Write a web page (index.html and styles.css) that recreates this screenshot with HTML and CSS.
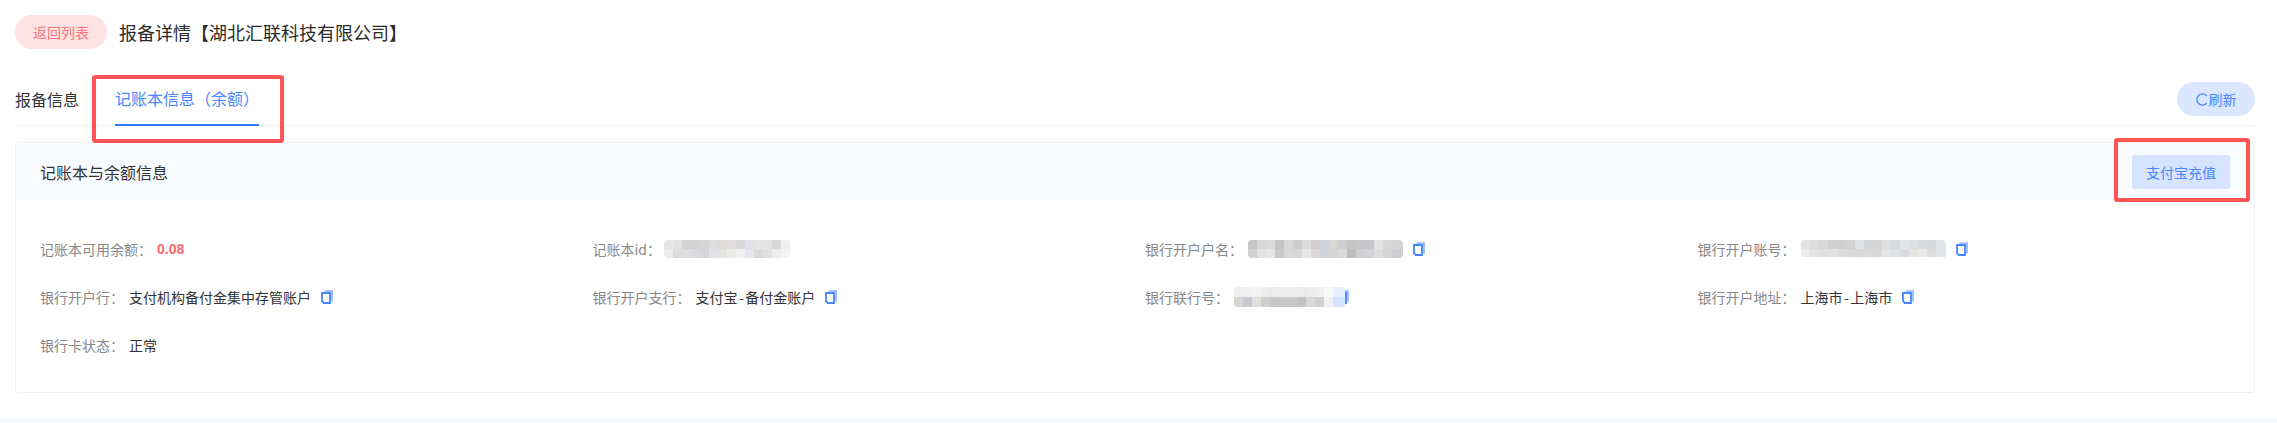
FILE: index.html
```html
<!DOCTYPE html>
<html lang="zh-CN">
<head>
<meta charset="utf-8">
<title>报备详情</title>
<link rel="stylesheet" href="styles.css">
</head>
<body>
<svg class="defs" width="0" height="0" aria-hidden="true">
  <symbol id="copy" viewBox="0 0 12 14">
    <path d="M3.5 1H11V11.5" fill="none" stroke="#8fb4ff" stroke-width="1.7"/>
    <path d="M1 3H9V13H2.8L1 11.2Z" fill="#fff" stroke="#4385ff" stroke-width="1.8"/>
  </symbol>
</svg>
<main class="page">
  <header class="head">
    <button class="back">返回列表</button>
    <h1 class="title">报备详情【湖北汇联科技有限公司】</h1>
  </header>

  <div class="tabs">
    <nav class="tab-list">
      <a class="tab">报备信息</a>
      <a class="tab tab-active">记账本信息（余额）<span class="mark mark-tab"></span></a>
    </nav>
    <button class="refresh">
      <svg class="refresh-icon" viewBox="0 0 14 14"><path d="M11.6 3.2A6 6 0 1 0 11.6 10.8" fill="none" stroke="#4a86ff" stroke-width="1.4"/></svg>刷新
    </button>
  </div>

  <section class="card">
    <div class="card-head">
      <h2 class="card-title">记账本与余额信息</h2>
      <button class="charge">支付宝充值<span class="mark mark-charge"></span></button>
    </div>
    <div class="grid">
      <div class="item"><span class="label">记账本可用余额：</span><span class="amount">0.08</span></div>
      <div class="item"><span class="label">记账本id：</span>
        <svg class="mosaic mosaic-id" width="126" height="18" shape-rendering="crispEdges">
          <rect x="0" y="0" width="9" height="9" fill="#e6e6e6"/><rect x="9" y="0" width="9" height="9" fill="#e2e2e2"/><rect x="18" y="0" width="9" height="9" fill="#d3d3d7"/><rect x="27" y="0" width="9" height="9" fill="#d2d2d5"/><rect x="36" y="0" width="9" height="9" fill="#d8d6d4"/><rect x="45" y="0" width="9" height="9" fill="#dedede"/><rect x="54" y="0" width="9" height="9" fill="#dfdbd6"/><rect x="63" y="0" width="9" height="9" fill="#dedede"/><rect x="72" y="0" width="9" height="9" fill="#d9d9d9"/><rect x="81" y="0" width="9" height="9" fill="#dfe2e6"/><rect x="90" y="0" width="9" height="9" fill="#e4e4e2"/><rect x="99" y="0" width="9" height="9" fill="#e3e3e3"/><rect x="108" y="0" width="9" height="9" fill="#d8d8d8"/><rect x="117" y="0" width="9" height="9" fill="#efefef"/>
          <rect x="0" y="9" width="9" height="9" fill="#ececec"/><rect x="9" y="9" width="9" height="9" fill="#dedcdb"/><rect x="18" y="9" width="9" height="9" fill="#dddddd"/><rect x="27" y="9" width="9" height="9" fill="#d9dadd"/><rect x="36" y="9" width="9" height="9" fill="#d6d6da"/><rect x="45" y="9" width="9" height="9" fill="#e0e2e5"/><rect x="54" y="9" width="9" height="9" fill="#e4e3df"/><rect x="63" y="9" width="9" height="9" fill="#ebebeb"/><rect x="72" y="9" width="9" height="9" fill="#f2f2f2"/><rect x="81" y="9" width="9" height="9" fill="#e4e8ec"/><rect x="90" y="9" width="9" height="9" fill="#dbd9d6"/><rect x="99" y="9" width="9" height="9" fill="#dfe0e2"/><rect x="108" y="9" width="9" height="9" fill="#ececec"/><rect x="117" y="9" width="9" height="9" fill="#f4f4f4"/>
        </svg>
      </div>
      <div class="item"><span class="label">银行开户户名：</span>
        <svg class="mosaic" width="155" height="18" shape-rendering="crispEdges">
          <rect x="0" y="0" width="9" height="9" fill="#c6c6c6"/><rect x="9" y="0" width="9" height="9" fill="#d6d8da"/><rect x="18" y="0" width="9" height="9" fill="#dadada"/><rect x="27" y="0" width="9" height="9" fill="#c6c6c6"/><rect x="36" y="0" width="9" height="9" fill="#d8d8d8"/><rect x="45" y="0" width="9" height="9" fill="#cccdcf"/><rect x="54" y="0" width="9" height="9" fill="#dbdbdb"/><rect x="63" y="0" width="9" height="9" fill="#d0cecc"/><rect x="72" y="0" width="9" height="9" fill="#cfd2d8"/><rect x="81" y="0" width="9" height="9" fill="#d8d6d2"/><rect x="90" y="0" width="9" height="9" fill="#cdcfd2"/><rect x="99" y="0" width="9" height="9" fill="#c6c4c4"/><rect x="108" y="0" width="9" height="9" fill="#c8c6c6"/><rect x="117" y="0" width="9" height="9" fill="#c4c7ca"/><rect x="126" y="0" width="9" height="9" fill="#e2e2e2"/><rect x="135" y="0" width="9" height="9" fill="#d8d8d8"/><rect x="144" y="0" width="11" height="9" fill="#d4d4d6"/>
          <rect x="0" y="9" width="9" height="9" fill="#d0d0d0"/><rect x="9" y="9" width="9" height="9" fill="#e2e3e5"/><rect x="18" y="9" width="9" height="9" fill="#e6e6e6"/><rect x="27" y="9" width="9" height="9" fill="#cbc9c6"/><rect x="36" y="9" width="9" height="9" fill="#d9d9d9"/><rect x="45" y="9" width="9" height="9" fill="#d6d7d9"/><rect x="54" y="9" width="9" height="9" fill="#e6e6e4"/><rect x="63" y="9" width="9" height="9" fill="#dcdad6"/><rect x="72" y="9" width="9" height="9" fill="#cfd2d8"/><rect x="81" y="9" width="9" height="9" fill="#d6d4d2"/><rect x="90" y="9" width="9" height="9" fill="#d6dadc"/><rect x="99" y="9" width="9" height="9" fill="#bdbbbb"/><rect x="108" y="9" width="9" height="9" fill="#d0d0d0"/><rect x="117" y="9" width="9" height="9" fill="#d0d3d6"/><rect x="126" y="9" width="9" height="9" fill="#dcdcdc"/><rect x="135" y="9" width="9" height="9" fill="#d6d6d6"/><rect x="144" y="9" width="11" height="9" fill="#ccced2"/>
        </svg>
        <svg class="copy"><use href="#copy"/></svg>
      </div>
      <div class="item"><span class="label">银行开户账号：</span>
        <svg class="mosaic" width="145" height="18" shape-rendering="crispEdges">
          <rect x="0" y="0" width="9" height="9" fill="#e2e2e2"/><rect x="9" y="0" width="9" height="9" fill="#dddddd"/><rect x="18" y="0" width="9" height="9" fill="#d8d6d6"/><rect x="27" y="0" width="9" height="9" fill="#cfd0d2"/><rect x="36" y="0" width="9" height="9" fill="#d0d0d0"/><rect x="45" y="0" width="9" height="9" fill="#d2d2d2"/><rect x="54" y="0" width="9" height="9" fill="#e0e3e6"/><rect x="63" y="0" width="9" height="9" fill="#d6d6d6"/><rect x="72" y="0" width="9" height="9" fill="#d6d6d6"/><rect x="81" y="0" width="9" height="9" fill="#e0e0e0"/><rect x="90" y="0" width="9" height="9" fill="#d8dadc"/><rect x="99" y="0" width="9" height="9" fill="#e2e5ea"/><rect x="108" y="0" width="9" height="9" fill="#dcdee2"/><rect x="117" y="0" width="9" height="9" fill="#d8dadc"/><rect x="126" y="0" width="9" height="9" fill="#d6d8da"/><rect x="135" y="0" width="10" height="9" fill="#e4e7ea"/>
          <rect x="0" y="9" width="9" height="8" fill="#ececec"/><rect x="9" y="9" width="9" height="8" fill="#e2e2e2"/><rect x="18" y="9" width="9" height="8" fill="#e0e0e0"/><rect x="27" y="9" width="9" height="8" fill="#e2e2e2"/><rect x="36" y="9" width="9" height="8" fill="#dcdcdc"/><rect x="45" y="9" width="9" height="8" fill="#dadada"/><rect x="54" y="9" width="9" height="8" fill="#d8d8d8"/><rect x="63" y="9" width="9" height="8" fill="#dadada"/><rect x="72" y="9" width="9" height="8" fill="#d8d8d6"/><rect x="81" y="9" width="9" height="8" fill="#e6e6e6"/><rect x="90" y="9" width="9" height="8" fill="#dfe0e2"/><rect x="99" y="9" width="9" height="8" fill="#d6d9de"/><rect x="108" y="9" width="9" height="8" fill="#e4e4e2"/><rect x="117" y="9" width="9" height="8" fill="#e8e8e6"/><rect x="126" y="9" width="9" height="8" fill="#dcdcdc"/><rect x="135" y="9" width="10" height="8" fill="#e2e5e8"/>
        </svg>
        <svg class="copy"><use href="#copy"/></svg>
      </div>

      <div class="item"><span class="label">银行开户行：</span><span class="value">支付机构备付金集中存管账户</span><svg class="copy"><use href="#copy"/></svg></div>
      <div class="item"><span class="label">银行开户支行：</span><span class="value">支付宝<span class="dash">-</span>备付金账户</span><svg class="copy"><use href="#copy"/></svg></div>
      <div class="item"><span class="label">银行联行号：</span>
        <svg class="mosaic mosaic-over" width="111" height="20" shape-rendering="crispEdges">
          <rect x="0" y="0" width="9" height="10" fill="#f0f0f0"/><rect x="9" y="0" width="9" height="10" fill="#f0f0f0"/><rect x="18" y="0" width="9" height="10" fill="#f4f3f2"/><rect x="27" y="0" width="9" height="10" fill="#eeeeee"/><rect x="36" y="0" width="9" height="10" fill="#ececec"/><rect x="45" y="0" width="9" height="10" fill="#eeeeee"/><rect x="54" y="0" width="9" height="10" fill="#eeeeee"/><rect x="63" y="0" width="9" height="10" fill="#ececec"/><rect x="72" y="0" width="9" height="10" fill="#eeeeee"/><rect x="81" y="0" width="9" height="10" fill="#f0f0f0"/><rect x="90" y="0" width="9" height="10" fill="#f8f8f8"/><rect x="99" y="0" width="12" height="10" fill="#e6eeff"/>
          <rect x="0" y="10" width="9" height="10" fill="#d8d4d2"/><rect x="9" y="10" width="9" height="10" fill="#c6cace"/><rect x="18" y="10" width="9" height="10" fill="#e0dfdc"/><rect x="27" y="10" width="9" height="10" fill="#cfcfcf"/><rect x="36" y="10" width="9" height="10" fill="#c8c6c6"/><rect x="45" y="10" width="9" height="10" fill="#c8c8c8"/><rect x="54" y="10" width="9" height="10" fill="#c6c9cc"/><rect x="63" y="10" width="9" height="10" fill="#c6c2c0"/><rect x="72" y="10" width="9" height="10" fill="#d6dadc"/><rect x="81" y="10" width="9" height="10" fill="#d2d0cc"/><rect x="90" y="10" width="9" height="10" fill="#eef0f2"/><rect x="99" y="10" width="12" height="10" fill="#d4e2ff"/>
        </svg>
        <svg class="copy copy-under"><use href="#copy"/></svg>
      </div>
      <div class="item"><span class="label">银行开户地址：</span><span class="value">上海市<span class="dash">-</span>上海市</span><svg class="copy"><use href="#copy"/></svg></div>

      <div class="item"><span class="label">银行卡状态：</span><span class="value">正常</span></div>
    </div>
  </section>
</main>
</body>
</html>
```

FILE: styles.css
```css
* { box-sizing: border-box; }
html, body { margin: 0; height: 423px; overflow: hidden; }
body {
  background: #f5f7ff;
  font-family: "Noto Sans CJK SC", "Noto Sans", sans-serif;
  color: #333;
}
.defs { display: block; height: 0; }
button { font: inherit; border: 0; padding: 0; }
h1, h2 { margin: 0; font-weight: 400; }

.page { background: #fff; height: 418px; padding: 15px 22px 0 15px; }

.head { display: flex; align-items: center; height: 34px; }
.back {
  width: 92px; height: 34px; border-radius: 17px;
  background: #ffe3e3; color: #f9777c; font-size: 14px;
}
.title { margin-left: 12px; font-size: 18px; color: #2a2a2a; }

.tabs {
  display: flex; align-items: center; justify-content: space-between;
  height: 53px; margin-top: 24px;
  border-bottom: 1px solid #eef0f4;
}
.tab-list { display: flex; height: 53px; gap: 36px; }
.tab { position: relative; display: flex; align-items: center; height: 52px; font-size: 16px; color: #333; }
.tab-active { width: 144px; color: #4a86ff; border-bottom: 2px solid #2f7bff; height: 53px; }
.refresh {
  display: flex; align-items: center; justify-content: center;
  width: 78px; height: 34px; border-radius: 17px;
  background: #dbe7ff; color: #4a86ff; font-size: 14px;
}
.refresh-icon { width: 13px; height: 13px; }

.mark { position: absolute; border: 4px solid #ff5555; border-radius: 3px; pointer-events: none; }
.mark-tab { left: -23px; top: 2px; width: 192px; height: 68px; }
.mark-charge { left: -18px; top: -17px; width: 136px; height: 64px; }

.card {
  height: 251px; margin-top: 16px;
  border: 1px solid #eef0f6; border-radius: 3px;
}
.card-head {
  display: flex; align-items: center; justify-content: space-between;
  height: 57px; padding: 0 24px 0 24px;
  background: #f8fbff;
}
.card-title { font-size: 16px; color: #333; }
.charge {
  position: relative;
  width: 98px; height: 34px; border-radius: 3px;
  background: #d6e4ff; color: #4a86ff; font-size: 14px;
}

.grid {
  display: grid;
  grid-template-columns: repeat(4, 552.5px);
  grid-auto-rows: 20px;
  row-gap: 28px;
  padding: 39px 0 0 24px;
}
.item { display: flex; align-items: center; font-size: 14px; line-height: 20px; }
.label { color: #888; margin-right: 5px; white-space: nowrap; }
.value { color: #333; white-space: nowrap; }
.dash { padding: 0 1.5px; }
.amount { color: #f9686d; font-family: "Liberation Sans", sans-serif; font-weight: 700; font-size: 14px; }
.mosaic { display: block; flex: none; border-radius: 4px; }
.mosaic-id { margin-left: -2px; }
.mosaic-over { position: relative; z-index: 1; }
.copy { width: 12px; height: 14px; margin-left: 10px; flex: none; }
.copy-under { margin-left: -8px; }
```
